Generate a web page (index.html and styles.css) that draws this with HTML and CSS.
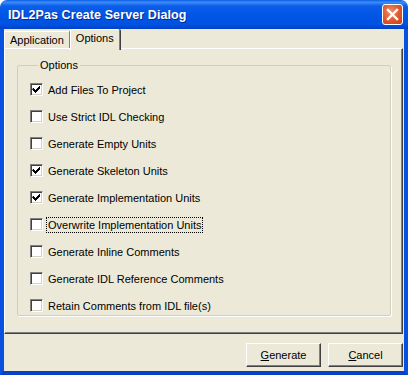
FILE: index.html
```html
<!DOCTYPE html>
<html lang="en">
    <head>
        <meta charset="UTF-8" />
        <title>IDL2Pas Create Server Dialog</title>
        <link rel="stylesheet" href="styles.css">
    </head>
    <body>
        <div class="window">
            <div class="titlebar">
                <span class="title-text">IDL2Pas Create Server Dialog</span>
                <button class="close-btn" type="button">
                    <svg width="13" height="13" viewBox="0 0 13 13">
                        <path d="M2 2 L11 11 M11 2 L2 11" stroke="#fff" stroke-width="2.4" stroke-linecap="square" />
                    </svg>
                </button>
            </div>
            <div class="frame">
                <ul class="tabs">
                    <li class="tab">Application</li>
                    <li class="tab tab-active">Options</li>
                </ul>
                <div class="tab-panel">
                    <fieldset class="group">
                        <legend class="group-title">Options</legend>
                        <label class="check-row"><span class="check-box checked"></span><span class="check-label">Add Files To Project</span></label>
                        <label class="check-row"><span class="check-box"></span><span class="check-label">Use Strict IDL Checking</span></label>
                        <label class="check-row"><span class="check-box"></span><span class="check-label">Generate Empty Units</span></label>
                        <label class="check-row"><span class="check-box checked"></span><span class="check-label">Generate Skeleton Units</span></label>
                        <label class="check-row"><span class="check-box checked"></span><span class="check-label">Generate Implementation Units</span></label>
                        <label class="check-row"><span class="check-box"></span><span class="check-label focused">Overwrite Implementation Units</span></label>
                        <label class="check-row"><span class="check-box"></span><span class="check-label">Generate Inline Comments</span></label>
                        <label class="check-row"><span class="check-box"></span><span class="check-label">Generate IDL Reference Comments</span></label>
                        <label class="check-row"><span class="check-box"></span><span class="check-label">Retain Comments from IDL file(s)</span></label>
                    </fieldset>
                </div>
                <div class="button-row">
                    <button class="btn" type="button"><u>G</u>enerate</button>
                    <button class="btn" type="button"><u>C</u>ancel</button>
                </div>
            </div>
        </div>
    </body>
</html>
```

FILE: styles.css
```css
html,
body,
ul,
li,
fieldset,
legend {
    padding: 0;
    margin: 0;
}
ul,
li {
    list-style: none;
}
body {
    width: 408px;
    height: 375px;
    overflow: hidden;
    font-family: "Liberation Sans", Arial, sans-serif;
    font-size: 11px;
    color: #000;
}

.window {
    display: flex;
    flex-flow: column;
    width: 408px;
    height: 375px;
    box-sizing: border-box;
}

.titlebar {
    display: flex;
    align-items: center;
    justify-content: space-between;
    height: 29px;
    padding: 0 5px 0 8px;
    box-sizing: border-box;
    border-radius: 7px 7px 0 0;
    background: linear-gradient(#0a5fe8 0%, #3d8bf7 8%, #0c5ee9 20%, #0055e5 55%, #0053e1 85%, #003fc4 100%);
}
.title-text {
    color: #fff;
    font-weight: bold;
    font-size: 12.5px;
    letter-spacing: 0.1px;
    text-shadow: 1px 1px 0 #0a2a8a;
}
.close-btn {
    display: flex;
    align-items: center;
    justify-content: center;
    width: 21px;
    height: 21px;
    padding: 0;
    border: 1px solid #fff;
    border-radius: 3px;
    background: radial-gradient(circle at 40% 35%, #f08d6c 0%, #e0592f 50%, #c83f18 100%);
}

.frame {
    flex: 1;
    display: flex;
    flex-flow: column;
    background-color: #ece9d8;
    border: 4px solid #0750e0;
    border-top: 0;
    border-bottom-color: #0840c8;
    padding-right: 1px;
}

.tabs {
    display: flex;
    align-items: flex-end;
    height: 19px;
    position: relative;
    z-index: 1;
}
.tab {
    height: 17px;
    padding: 0 5px 0 5px;
    line-height: 17px;
    box-sizing: border-box;
    border-top: 1px solid #fff;
    border-left: 1px solid #fff;
    border-right: 1px solid #808080;
    border-radius: 2px 2px 0 0;
    box-shadow: 1px 0 0 #404040;
}
.tab-active {
    height: 21px;
    margin-bottom: -2px;
    padding: 0 5px 2px 5px;
    line-height: 17px;
    background-color: #ece9d8;
}

.tab-panel {
    height: 286px;
    box-sizing: border-box;
    padding: 10px 11px 10px 12px;
    border-top: 1px solid #fff;
    border-left: 1px solid #fff;
    border-right: 1px solid #404040;
    border-bottom: 1px solid #404040;
    box-shadow: inset -1px -1px 0 #808080;
}

.group {
    height: 257px;
    box-sizing: border-box;
    padding: 5px 0 0 12px;
    border: 1px solid #d0d0bf;
    border-radius: 2px;
    box-shadow: 1px 1px 0 #fff;
}
.group-title {
    margin-left: 8px;
    padding: 0 2px;
}

.check-row {
    display: flex;
    align-items: center;
    height: 27px;
}
.check-box {
    display: inline-block;
    width: 13px;
    height: 13px;
    box-sizing: border-box;
    margin-right: 3px;
    background-color: #fff;
    border-top: 1px solid #808080;
    border-left: 1px solid #808080;
    border-right: 1px solid #fff;
    border-bottom: 1px solid #fff;
    box-shadow: inset 1px 1px 0 #404040, inset -1px -1px 0 #d4d0c8;
}
.check-box.checked {
    background: #fff url("data:image/svg+xml;utf8,<svg xmlns='http://www.w3.org/2000/svg' width='11' height='11'><path d='M2 4h1v1h1v1h1v-1h1v-1h1v-1h1v-1h1v3h-1v1h-1v1h-1v1h-1v1h-1v-1h-1v-1h-1v-1h-1z' fill='black'/></svg>") no-repeat 0 0;
}
.check-label {
    padding: 1px;
    border: 1px solid transparent;
}
.check-label.focused {
    border: 1px dotted #000;
}

.button-row {
    display: flex;
    justify-content: flex-end;
    gap: 7px;
    padding-top: 9px;
}
.btn {
    width: 75px;
    height: 24px;
    padding: 0;
    font-family: "Liberation Sans", Arial, sans-serif;
    font-size: 11px;
    color: #000;
    background-color: #ece9d8;
    border-top: 1px solid #fff;
    border-left: 1px solid #fff;
    border-right: 1px solid #404040;
    border-bottom: 1px solid #404040;
    box-shadow: inset -1px -1px 0 #808080;
}
```
